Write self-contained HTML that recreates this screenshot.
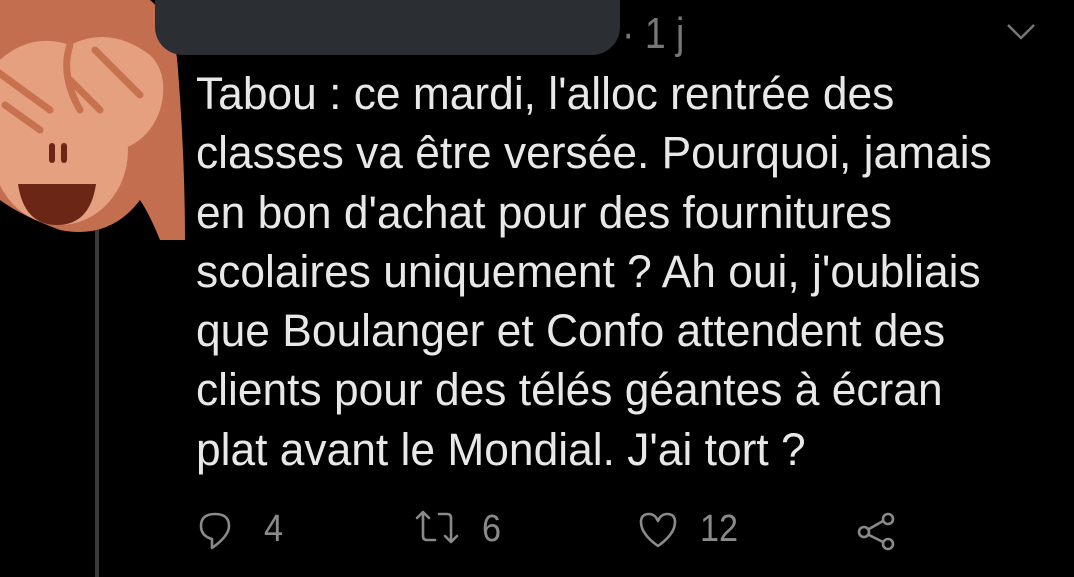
<!DOCTYPE html>
<html><head><meta charset="utf-8"><style>
html,body{margin:0;padding:0;background:#000;width:1074px;height:577px;overflow:hidden;position:relative;font-family:"Liberation Sans",sans-serif}
.t{position:absolute;left:196px;top:64px;color:#e8e8e8;font-size:45px;line-height:59.3px;white-space:nowrap;transform:scaleX(0.985);transform-origin:0 0}
.pill{position:absolute;left:155px;top:-30px;width:465px;height:85px;background:#2b2e33;border-radius:28px}
.time{position:absolute;left:622px;top:9px;color:#777;font-size:44px;transform:scaleX(.85);transform-origin:0 0}
.line{position:absolute;left:95px;top:225px;width:4px;height:352px;background:#3a3a3a}
.n{position:absolute;top:508px;color:#8a8a8a;font-size:38px;transform:scaleX(.9);transform-origin:0 0}
</style></head><body>
<div class="line"></div>
<svg style="position:absolute;left:0;top:0" width="190" height="245" viewBox="0 0 190 245">
<path d="M0 0 L150 0 Q175 20 178 70 Q185 160 185 240 L160 240 Q150 215 140 200 Q110 240 60 230 Q20 215 0 200 Z" fill="#c46e50"/>
<ellipse cx="60" cy="150" rx="68" ry="75" fill="#e4a07f"/>
<path d="M-10 70 Q25 30 70 45 Q110 25 150 55 Q170 75 160 110 Q150 140 120 150 L15 150 Q-10 130 -10 70 Z" fill="#e4a07f"/>
<path d="M-5 70 L50 110 M5 105 L40 130 M70 45 Q60 75 80 110 M95 50 L140 95 M70 80 L100 110" stroke="#c8714f" stroke-width="7" fill="none" stroke-linecap="round"/>
<rect x="49" y="143" width="6" height="20" rx="3" fill="#6b2615"/><rect x="61" y="143" width="6" height="20" rx="3" fill="#6b2615"/>
<path d="M18 184 L96 184 Q90 225 57 225 Q24 225 18 184 Z" fill="#6b2615"/>
</svg>
<div class="pill"></div>
<div class="time">· 1 j</div>
<svg style="position:absolute;left:1005px;top:20px" width="32" height="22"><path d="M3 5 L16 18 L29 5" stroke="#777" stroke-width="2.5" fill="none"/></svg>
<div class="t">Tabou : ce mardi, l'alloc rentrée des<br>classes va être versée. Pourquoi, jamais<br>en bon d'achat pour des fournitures<br>scolaires uniquement ? Ah oui, j'oubliais<br>que Boulanger et Confo attendent des<br>clients pour des télés géantes à écran<br>plat avant le Mondial. J'ai tort ?</div>
<svg style="position:absolute;left:195px;top:508px" width="720" height="50" fill="none" stroke="#8a8a8a" stroke-width="2.6" stroke-linejoin="round" stroke-linecap="round">
<path d="M17 40 L17 31 Q6 28 6 18 Q6 6 20 6 Q34 6 34 18 Q34 28 17 40 Z"/>
<path d="M222 10 L228 4 L234 10 M228 4 L228 28 Q228 32 232 32 L240 32 M244 6 L252 6 Q256 6 256 10 L256 34 M250 28 L256 34 L262 28"/>
<path d="M463 38 Q446 26 446 14 Q446 6 454 6 Q460 6 463 13 Q466 6 472 6 Q480 6 480 14 Q480 26 463 38 Z"/>
<circle cx="693" cy="11" r="5"/><circle cx="693" cy="36" r="5"/><circle cx="669" cy="24" r="5"/><path d="M674 21 L688 13 M674 27 L688 34"/>
</svg>
<div class="n" style="left:264px">4</div>
<div class="n" style="left:482px">6</div>
<div class="n" style="left:700px">12</div>
</body></html>
